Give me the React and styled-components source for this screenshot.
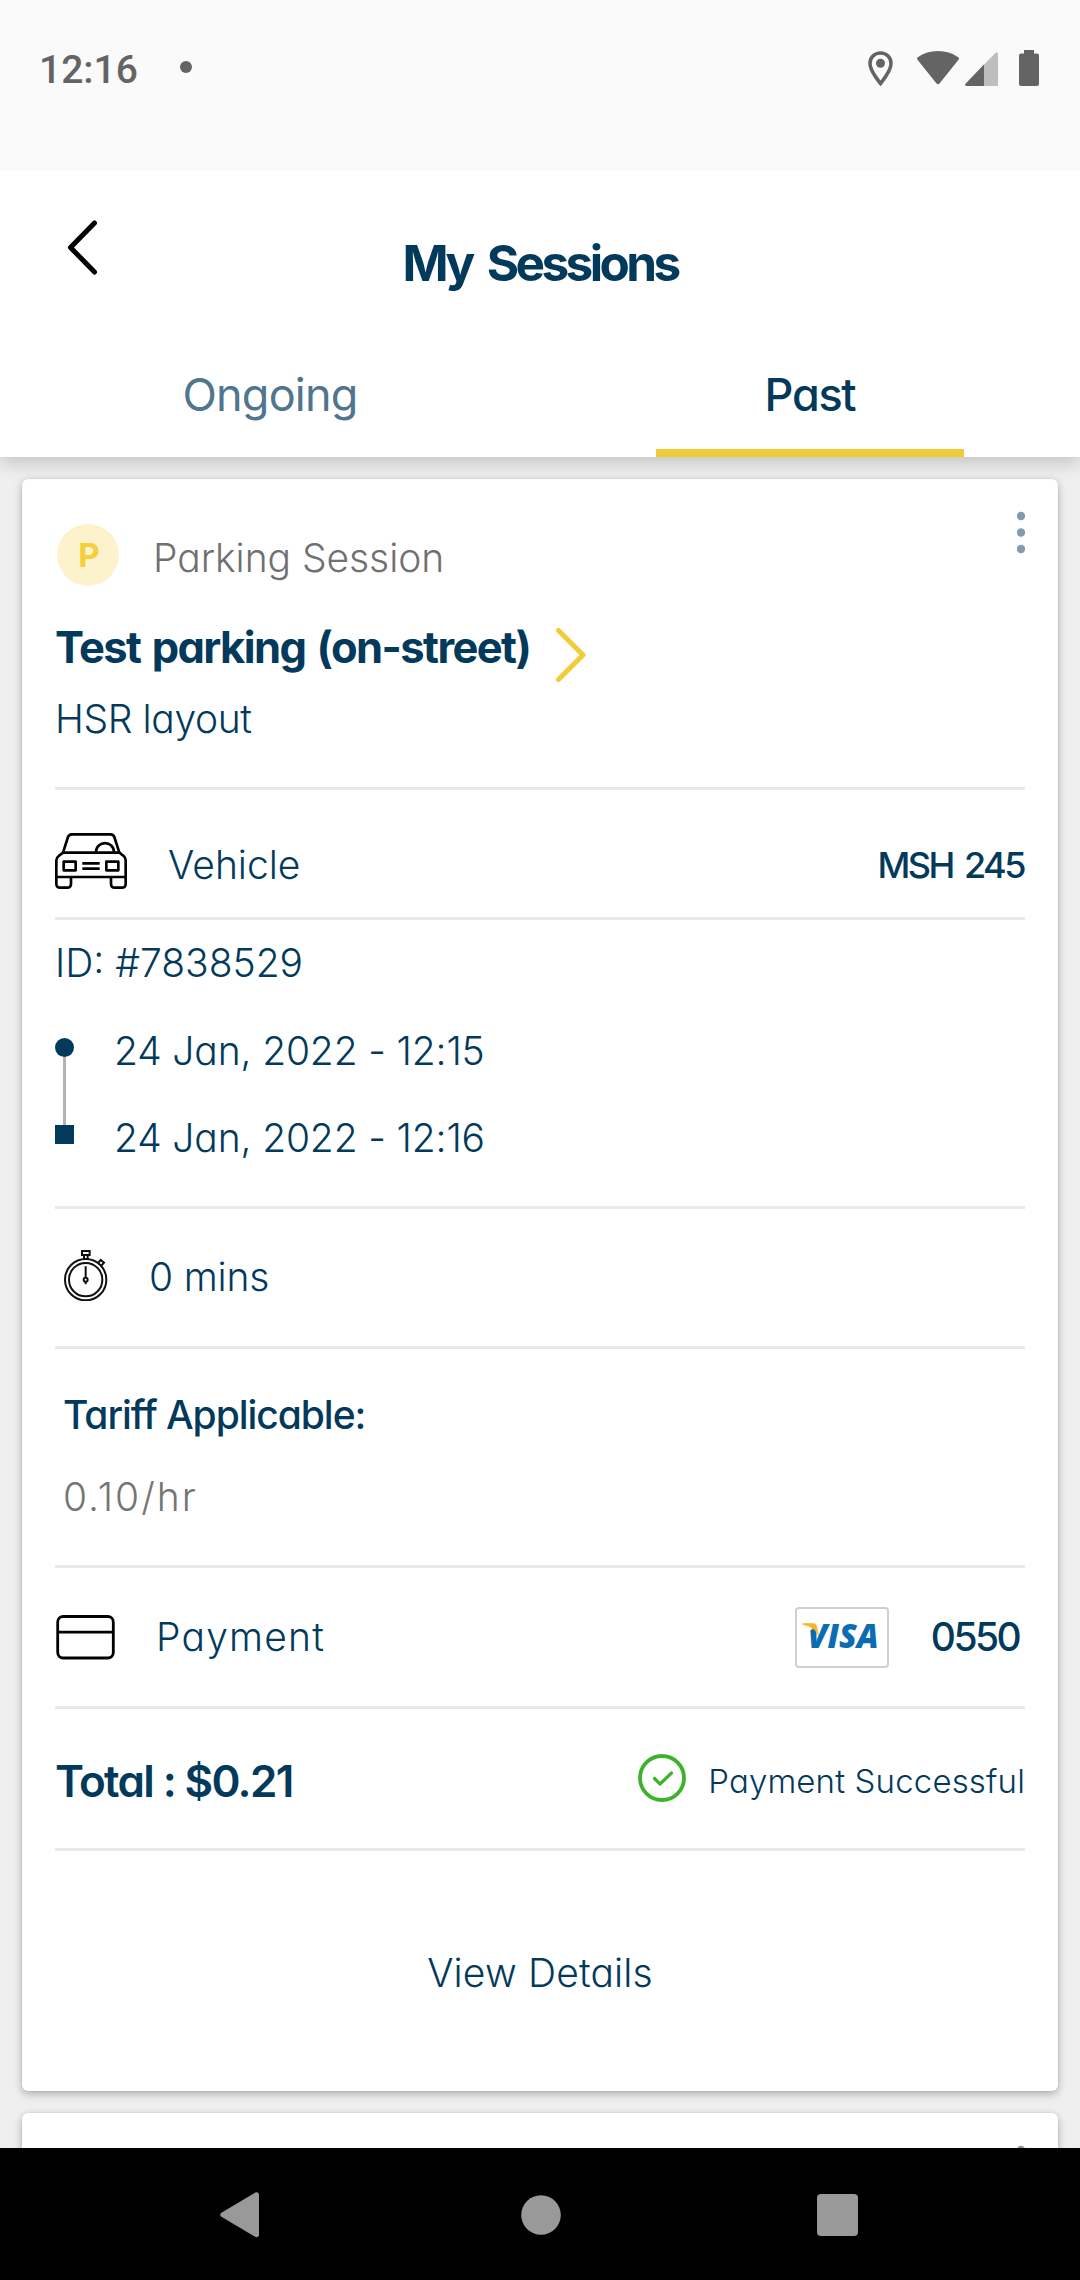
import React from "react";
import styled, { createGlobalStyle } from "styled-components";

const navy = "#033a5c";
const yellow = "#f2cc38";

const GlobalStyle = createGlobalStyle`
  * { box-sizing: border-box; }
  body {
    margin: 0;
    background: #efefef;
    font-family: Inter, "Noto Sans", sans-serif;
    font-feature-settings: "cv11";
  }
  svg { display: block; flex: none; }
`;

const Screen = styled.div`
  width: 1080px;
  height: 2280px;
  display: flex;
  flex-direction: column;
  overflow: hidden;
  background: #efefef;
`;

const Txt = styled.span`
  font-size: ${(p) => p.$size || 39}px;
  font-weight: ${(p) => p.$weight || 300};
  letter-spacing: ${(p) => p.$track || 0}px;
  word-spacing: ${(p) => p.$word || 0}px;
  line-height: ${(p) => p.$line || 46}px;
  color: ${(p) => p.$color || navy};
  white-space: pre;
`;

/* ---------- status bar ---------- */
const StatusBar = styled.div`
  flex: none;
  position: relative;
  z-index: 2;
  height: 171px;
  padding: 0 41px 32px 39px;
  background: #fafafa;
  display: flex;
  align-items: center;
  justify-content: space-between;
`;

const Clock = styled.div`
  display: flex;
  align-items: center;
  gap: 42px;
  font: 500 39px/46px Roboto, sans-serif;
  color: #646464;
`;

const Dot = styled.i`
  width: 12px;
  height: 12px;
  margin-bottom: 5px;
  border-radius: 50%;
  background: #646464;
`;

const StatusIcons = styled.div`
  display: flex;
  align-items: flex-end;
  height: 36px;
  margin-bottom: 4px;
`;

const IconSlot = styled.div`
  margin-left: ${(p) => p.$gap || 0}px;
`;

/* ---------- header ---------- */
const Header = styled.header`
  flex: none;
  position: relative;
  z-index: 1;
  background: #fff;
  box-shadow: 0 5px 18px rgba(0, 0, 0, 0.2);
`;

const TitleBar = styled.div`
  height: 183px;
  display: grid;
  grid-template-columns: 150px 1fr 150px;
  align-items: center;
  justify-items: center;
`;

const BackButton = styled.button`
  justify-self: start;
  margin: 0 0 30px 66px;
  padding: 0;
  border: 0;
  background: none;
`;

const Tabs = styled.nav`
  display: grid;
  grid-template-columns: 1fr 1fr;
  height: 103px;
`;

const Tab = styled.div`
  display: flex;
  flex-direction: column;
  align-items: center;
  justify-content: space-between;
`;

const Underline = styled.div`
  width: 308px;
  height: 8px;
  background: ${yellow};
`;

/* ---------- cards ---------- */
const List = styled.main`
  flex: 1;
  min-height: 0;
  overflow: hidden;
  padding: 22px 22px 0;
  display: flex;
  flex-direction: column;
  gap: 22px;
`;

const Card = styled.article`
  flex: none;
  padding: 0 33px;
  border-radius: 6px;
  background: #fff;
  box-shadow: 0 3px 8px rgba(0, 0, 0, 0.28), 0 0 2px rgba(0, 0, 0, 0.12);
`;

const Divider = styled.hr`
  height: 3px;
  margin: 0;
  border: 0;
  background: #e9e9e9;
`;

const Intro = styled.section`
  height: 308px;
  padding-top: 32px;
`;

const IntroTop = styled.div`
  display: flex;
  align-items: flex-start;
  justify-content: space-between;
`;

const Kind = styled.div`
  display: flex;
  align-items: center;
  gap: 34px;
  margin: 13px 0 0 2px;
`;

const Badge = styled.div`
  width: 62px;
  height: 62px;
  padding-left: 2px;
  border-radius: 50%;
  background: #fcf2cc;
  display: flex;
  align-items: center;
  justify-content: center;
`;

const KindLabel = styled.div`
  padding-top: 6px;
`;

const Place = styled.div`
  display: flex;
  align-items: flex-start;
  gap: 25px;
  height: 55px;
  margin-top: 41px;
`;

const Address = styled.div`
  margin: 14px 0 0;
`;

const Row = styled.section`
  display: flex;
  align-items: center;
  height: ${(p) => p.$h}px;
  padding-top: ${(p) => p.$top || 0}px;
  padding-bottom: ${(p) => p.$bottom || 0}px;
  padding-left: ${(p) => p.$left || 0}px;
  gap: ${(p) => p.$gap || 0}px;
`;

const Lift = styled.div`
  margin-bottom: ${(p) => p.$by}px;
`;

const Push = styled.div`
  margin-left: auto;
  display: flex;
  align-items: center;
  gap: ${(p) => p.$gap || 0}px;
  padding-right: ${(p) => p.$right || 0}px;
`;

const Times = styled.section`
  height: 286px;
  padding-top: 20px;
`;

const Timeline = styled.div`
  display: flex;
  gap: 40px;
  margin-top: 20px;
`;

const Rail = styled.div`
  display: flex;
  flex-direction: column;
  align-items: center;
  width: 19px;
  height: 106px;
  margin-top: 32px;
`;

const Mark = styled.div`
  width: 19px;
  height: 19px;
  border-radius: ${(p) => (p.$round ? "50%" : "0")};
  background: ${navy};
`;

const Thread = styled.div`
  flex: 1;
  width: 3px;
  background: #b3b3b3;
`;

const Stack = styled.div`
  display: flex;
  flex-direction: column;
  padding-top: 1px;
`;

const Tariff = styled.section`
  display: flex;
  flex-direction: column;
  gap: 36px;
  height: 216px;
  padding: 43px 0 0 8px;
`;

const CardBrand = styled.div`
  width: 94px;
  height: 61px;
  border: 2px solid #cfcfcf;
  border-radius: 4px;
`;

const DetailsButton = styled.button`
  display: flex;
  align-items: center;
  justify-content: center;
  width: 100%;
  height: 240px;
  padding: 3px 0 0;
  border: 0;
  background: none;
  font-family: inherit;
  font-feature-settings: inherit;
`;

const Peek = styled.div`
  display: flex;
  justify-content: flex-end;
  height: 200px;
  padding-top: 32px;
`;

/* ---------- system navigation ---------- */
const SystemNav = styled.footer`
  flex: none;
  position: relative;
  height: 132px;
  padding: 1px 222px 0 220px;
  background: #000;
  display: flex;
  align-items: center;
  justify-content: space-between;
`;

const PinIcon = () => (
  <svg width="25" height="35" viewBox="0 0 25 35">
    <path d="M12.5 2C6.4 2 2 6.600 2 12.400C2 20 12.500 32.500 12.500 32.500S23 20 23 12.400C23 6.600 18.600 2 12.500 2Z" fill="none" stroke="#646464" strokeWidth="3.6" />
    <circle cx="12.500" cy="12.300" r="4.500" fill="#646464" />
  </svg>
);
const WifiIcon = () => (
  <svg width="42" height="35" viewBox="0 0 42 35">
    <path d="M.8 6.200C6.500 2.200 13.500 0 21 0s14.500 2.200 20.200 6.200c1 .7 1 1.600.3 2.500L22.700 32.300c-1 1.300-2.400 1.300-3.400 0L.5 8.700C-.2 7.800-.2 6.900.8 6.200Z" fill="#646464" />
  </svg>
);
const SignalIcon = () => (
  <svg width="34" height="34" viewBox="0 0 34 34">
    <path d="M33 2.500C33 0 31.600-.3 30.300 1L.8 31.400C-.4 32.700 0 34 1.600 34H33Z" fill="#bebebe" />
    <path d="M19 12.600L.8 31.400C-.4 32.700 0 34 1.600 34H19Z" fill="#646464" />
  </svg>
);
const BatteryIcon = () => (
  <svg width="20" height="36" viewBox="0 0 20 36">
    <path d="M5 0h10v3.500h3q2 0 2 2V34q0 2-2 2H2q-2 0-2-2V5.500q0-2 2-2h3Z" fill="#646464" />
  </svg>
);
const ChevronLeft = () => (
  <svg width="32" height="55" viewBox="0 0 32 55">
    <path d="M28.500 3L4.500 27.500L28.500 52" fill="none" stroke="#000" strokeWidth="5" strokeLinecap="round" strokeLinejoin="round" />
  </svg>
);
const ChevronRight = () => (
  <svg width="32" height="55" viewBox="0 0 32 55">
    <path d="M3.500 3.500L28 28L3.500 52.500" fill="none" stroke={yellow} strokeWidth="5" strokeLinecap="round" strokeLinejoin="round" />
  </svg>
);
const KebabIcon = () => (
  <svg width="8" height="43" viewBox="0 0 8 43" fill="#819bb0">
    <circle cx="4" cy="5" r="4.200" />
    <circle cx="4" cy="21.500" r="4.200" />
    <circle cx="4" cy="38" r="4.200" />
  </svg>
);
const CarIcon = () => (
  <svg width="72" height="56" viewBox="45 42 216 168" fill="none" stroke="#000" strokeWidth="8" strokeLinejoin="round">
    <path d="M69 101L84 54Q87 46 95 46H212Q220 46 223 54L238 101" />
    <path d="M69 101H238L251 111Q257 116 257 124V174H49V124Q49 116 56 111Z" />
    <path d="M168 100C168 63 222 63 222 100" />
    <rect x="71" y="128" width="36" height="26" />
    <rect x="199" y="128" width="36" height="26" />
    <path d="M127 133H179M127 149H179" />
    <path d="M49 174V194Q49 206 61 206H81Q93 206 93 194V174" />
    <path d="M213 174V194Q213 206 225 206H245Q257 206 257 194V174" />
  </svg>
);
const StopwatchIcon = () => (
  <svg width="44" height="51" viewBox="41 29 132 153" fill="none" stroke="#111" strokeWidth="6">
    <circle cx="106" cy="118" r="62" />
    <circle cx="106" cy="118" r="50" />
    <rect x="95" y="32" width="23" height="12" />
    <path d="M101 44V56M112 44V56" />
    <path d="M106 78V112M106 124V132" />
    <circle cx="106" cy="118" r="6" />
    <path d="M142 70L151 59L161 67L152 77" />
  </svg>
);
const CreditCardIcon = () => (
  <svg width="59" height="45" viewBox="0 0 59 45" fill="none" stroke="#000" strokeWidth="2.800">
    <rect x="1.700" y="1.500" width="55.600" height="41.500" rx="5.500" />
    <path d="M2 17.200H57" />
  </svg>
);
const VisaMark = () => (
  <svg width="90" height="57" viewBox="0 0 90 57">
    <text x="10.500" y="39" textLength="71" lengthAdjust="spacingAndGlyphs" fontFamily="Open Sans, sans-serif" fontWeight="800" fontStyle="italic" fontSize="34" fill="#0a6cb3">VISA</text>
    <path d="M4 10H20V16L14 21L4 24Z" fill="#fff" />
    <path d="M6 14.500H16.500Q19 14.500 19.500 17L21.600 27C19.500 21 14 17 6 15.500Z" fill="#f9b423" stroke="#f9b423" strokeWidth=".6" />
  </svg>
);
const CheckIcon = () => (
  <svg width="48" height="48" viewBox="0 0 48 48" fill="none" stroke="#3cb32b" strokeLinecap="round" strokeLinejoin="round">
    <circle cx="24" cy="24" r="22" strokeWidth="3.800" />
    <path d="M16.500 24.500L22 30L33.500 19" strokeWidth="3.200" />
  </svg>
);
const NavBackIcon = () => (
  <svg width="44" height="46" viewBox="0 0 44 46">
    <path d="M1.400 20.800L35 .8C37-.3 39 .5 39 3V42.500C39 45 37 45.800 35 44.700L1.400 24.700C-.2 23.600-.2 21.900 1.400 20.800Z" fill="#999" />
  </svg>
);
const NavHomeIcon = () => (
  <svg width="40" height="40" viewBox="0 0 40 40"><circle cx="20" cy="20" r="19.800" fill="#999" /></svg>
);
const NavRecentsIcon = () => (
  <svg width="41" height="42" viewBox="0 0 41 42"><rect width="41" height="42" rx="4" fill="#999" /></svg>
);

export default function App() {
  return (
    <Screen>
      <GlobalStyle />
      <StatusBar>
        <Clock>
          12:16
          <Dot />
        </Clock>
        <StatusIcons>
          <IconSlot><PinIcon /></IconSlot>
          <IconSlot $gap={24}><WifiIcon /></IconSlot>
          <IconSlot $gap={6}><SignalIcon /></IconSlot>
          <IconSlot $gap={20}><BatteryIcon /></IconSlot>
        </StatusIcons>
      </StatusBar>

      <Header>
        <TitleBar>
          <BackButton aria-label="Back"><ChevronLeft /></BackButton>
          <Txt $size={49.500} $weight={650} $track={-3.6} $word={7} $line={60}>My Sessions</Txt>
        </TitleBar>
        <Tabs>
          <Tab>
            <Txt $size={45} $weight={400} $track={-0.8} $line={81} $color="#50758f">Ongoing</Txt>
          </Tab>
          <Tab>
            <Txt $size={45} $weight={450} $track={-1.3} $line={81}>Past</Txt>
            <Underline />
          </Tab>
        </Tabs>
      </Header>

      <List>
        <Card>
          <Intro>
            <IntroTop>
              <Kind>
                <Badge><Txt $size={33} $weight={700} $color="#f5cf3d">P</Txt></Badge>
                <KindLabel><Txt $track={-0.05} $color="#707070">Parking Session</Txt></KindLabel>
              </Kind>
              <KebabIcon />
            </IntroTop>
            <Place>
              <Txt $size={43.500} $weight={680} $track={-1.6} $word={2.500} $line={41}>Test parking (on-street)</Txt>
              <ChevronRight />
            </Place>
            <Address><Txt $track={-0.4} $line={45}>HSR layout</Txt></Address>
          </Intro>
          <Divider />
          <Row $h={127} $top={22} $gap={41}>
            <Lift $by={7}><CarIcon /></Lift>
            <Txt>Vehicle</Txt>
            <Push $right={1}><Txt $size={36} $weight={500} $track={-2.5} $word={4}>MSH 245</Txt></Push>
          </Row>
          <Divider />
          <Times>
            <Txt>ID: #7838529</Txt>
            <Timeline>
              <Rail>
                <Mark $round />
                <Thread />
                <Mark />
              </Rail>
              <Stack>
                <Txt $line={87} $track={-0.15}>24 Jan, 2022 - 12:15</Txt>
                <Txt $line={87} $track={-0.15}>24 Jan, 2022 - 12:16</Txt>
              </Stack>
            </Timeline>
          </Times>
          <Divider />
          <Row $h={137} $bottom={1} $left={9} $gap={41}>
            <Lift $by={3}><StopwatchIcon /></Lift>
            <Txt $track={-0.2}>0 mins</Txt>
          </Row>
          <Divider />
          <Tariff>
            <Txt $weight={550} $track={-1.05}>Tariff Applicable:</Txt>
            <Txt $track={2} $color="#757575">0.10/hr</Txt>
          </Tariff>
          <Divider />
          <Row $h={138} $left={1} $gap={41}>
            <CreditCardIcon />
            <Txt $track={1.2}>Payment</Txt>
            <Push $gap={42} $right={6}>
              <CardBrand><VisaMark /></CardBrand>
              <Txt $weight={500} $track={-2.6}>0550</Txt>
            </Push>
          </Row>
          <Divider />
          <Row $h={139} $top={4}>
            <Txt $size={44} $weight={560} $track={-1.65}>Total : $0.21</Txt>
            <Push $gap={22}>
              <Lift $by={6}><CheckIcon /></Lift>
              <Txt $size={33} $track={0.15}>Payment Successful</Txt>
            </Push>
          </Row>
          <Divider />
          <DetailsButton><Txt $track={0.15}>View Details</Txt></DetailsButton>
        </Card>
        <Card>
          <Peek><KebabIcon /></Peek>
        </Card>
      </List>

      <SystemNav>
        <NavBackIcon />
        <NavHomeIcon />
        <NavRecentsIcon />
      </SystemNav>
    </Screen>
  );
}
